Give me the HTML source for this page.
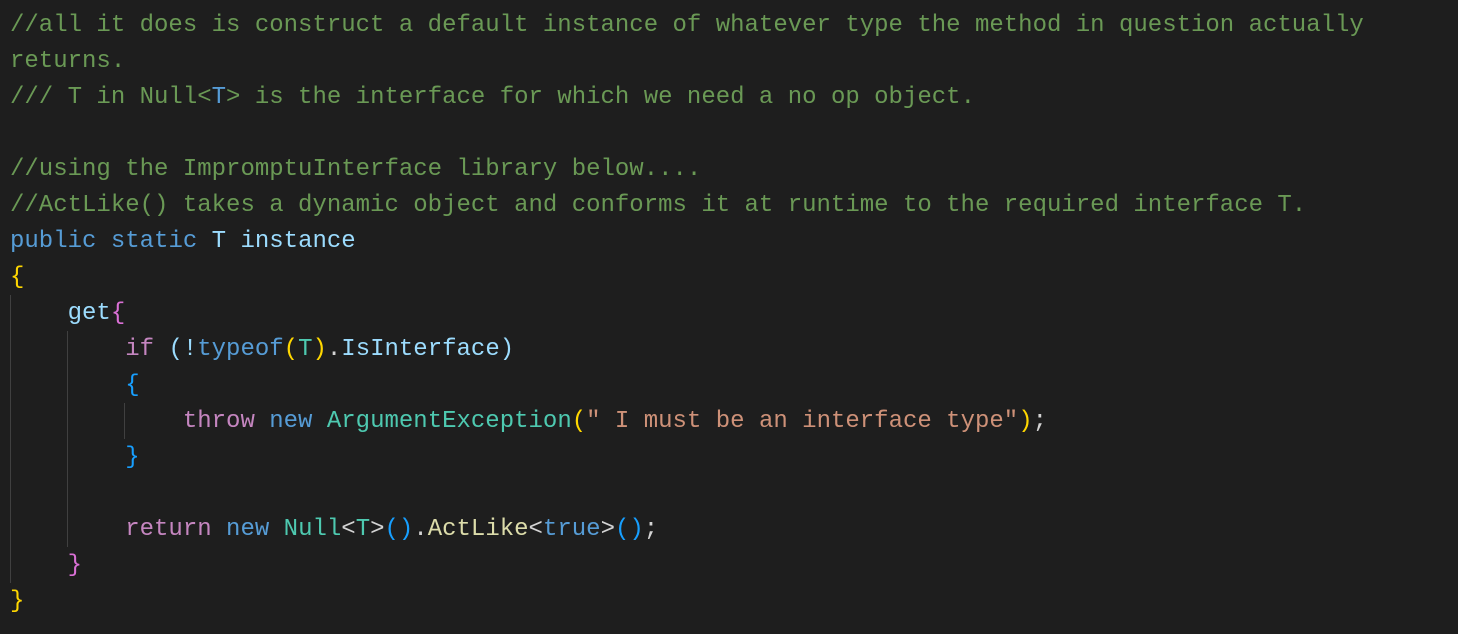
<!DOCTYPE html>
<html><head><meta charset="utf-8"><style>
html,body{margin:0;padding:0;background:#1e1e1e;width:1458px;height:634px;overflow:hidden}
.l{position:absolute;left:10px;height:36px;line-height:36px;font-family:"Liberation Mono",monospace;font-size:24px;white-space:pre;color:#d4d4d4;margin-top:2px}
.c{color:#6a9955}.k{color:#569cd6}.v{color:#9cdcfe}.y{color:#ffd700}.p{color:#da70d6}.b{color:#179fff}
.ctl{color:#c586c0}.t{color:#4ec9b0}.s{color:#ce9178}.f{color:#dcdcaa}
.g{position:absolute;width:1px;background:#404040}
</style></head><body>
<div class="g" style="left:10px;top:295px;height:288px"></div>
<div class="g" style="left:67px;top:331px;height:216px"></div>
<div class="g" style="left:124px;top:403px;height:36px"></div>
<div class="l c" style="top:6px">//all it does is construct a default instance of whatever type the method in question actually</div>
<div class="l c" style="top:42px">returns.</div>
<div class="l c" style="top:78px">/// T in Null&lt;<span class="k">T</span>&gt; is the interface for which we need a no op object.</div>
<div class="l c" style="top:150px">//using the ImpromptuInterface library below....</div>
<div class="l c" style="top:186px">//ActLike() takes a dynamic object and conforms it at runtime to the required interface T.</div>
<div class="l" style="top:222px"><span class="k">public</span> <span class="k">static</span> <span class="v">T</span> <span class="v">instance</span></div>
<div class="l" style="top:258px"><span class="y">{</span></div>
<div class="l" style="top:294px">    <span class="v">get</span><span class="p">{</span></div>
<div class="l" style="top:330px">        <span class="ctl">if</span> <span class="v">(!</span><span class="k">typeof</span><span class="y">(</span><span class="t">T</span><span class="y">)</span>.<span class="v">IsInterface</span><span class="v">)</span></div>
<div class="l" style="top:366px">        <span class="b">{</span></div>
<div class="l" style="top:402px">            <span class="ctl">throw</span> <span class="k">new</span> <span class="t">ArgumentException</span><span class="y">(</span><span class="s">" I must be an interface type"</span><span class="y">)</span>;</div>
<div class="l" style="top:438px">        <span class="b">}</span></div>
<div class="l" style="top:510px">        <span class="ctl">return</span> <span class="k">new</span> <span class="t">Null</span>&lt;<span class="t">T</span>&gt;<span class="b">()</span>.<span class="f">ActLike</span>&lt;<span class="k">true</span>&gt;<span class="b">()</span>;</div>
<div class="l" style="top:546px">    <span class="p">}</span></div>
<div class="l" style="top:582px"><span class="y">}</span></div>
</body></html>
